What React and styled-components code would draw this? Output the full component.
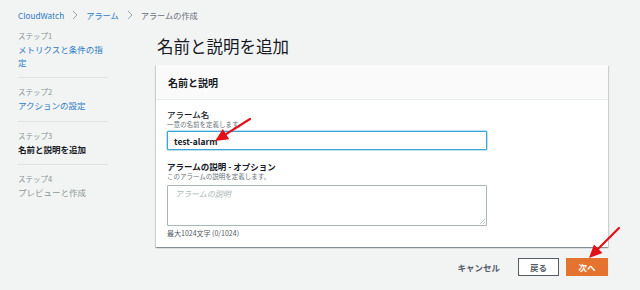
import React from 'react';
import styled, { createGlobalStyle } from 'styled-components';

const GlobalStyle = createGlobalStyle`
  html, body {
    margin: 0;
    padding: 0;
    background: #f2f3f3;
    font-family: "Noto Sans CJK JP", "Noto Sans", "Liberation Sans", sans-serif;
    color: #16191f;
  }
  * { box-sizing: border-box; }
`;

const Page = styled.div`
  position: relative;
  width: 640px;
  height: 290px;
  overflow: hidden;
`;

const Breadcrumb = styled.nav`
  display: flex;
  align-items: center;
  gap: 8px;
  height: 22px;
  padding: 9px 0 1px 18px;
  font-size: 8.2px;
  line-height: 12px;
`;

const Crumb = styled.span`
  color: ${(p) => (p.$link ? '#2e7bc4' : '#687078')};
`;

const Chevron = () => (
  <svg width="6" height="10" viewBox="0 0 6 10">
    <polyline points="1,1 5,5 1,9" fill="none" stroke="#9aa5a6" strokeWidth="1" />
  </svg>
);

const Layout = styled.div`
  display: flex;
  padding: 0 32px 0 18px;
`;

const Sidebar = styled.ul`
  list-style: none;
  margin: 0;
  padding: 0;
  width: 90px;
  flex-shrink: 0;
`;

const Step = styled.li`
  padding: 8px 0 9px;
  border-bottom: ${(p) => (p.$last ? 'none' : '1px solid #dfe3e4')};
`;

const StepNo = styled.div`
  font-size: 7.5px;
  line-height: 12px;
  color: #879596;
`;

const StepName = styled.div`
  margin-top: 1px;
  font-size: 8.5px;
  line-height: 12.5px;
  font-weight: ${(p) => (p.$state === 'current' ? 700 : 400)};
  color: ${(p) =>
    p.$state === 'current' ? '#16191f' : p.$state === 'done' ? '#2e7bc4' : '#8d9899'};
`;

const Main = styled.main`
  flex: 1;
  margin-left: 48px;
`;

const Title = styled.h1`
  margin: 12px 0 0 1px;
  font-size: 16.5px;
  line-height: 24px;
  font-weight: 400;
  color: #16191f;
`;

const Panel = styled.section`
  margin-top: 7px;
  background: #fff;
  box-shadow: 0 1px 1px rgba(0, 28, 36, 0.3), 1px 1px 1px rgba(0, 28, 36, 0.12),
    -1px 1px 1px rgba(0, 28, 36, 0.12);
`;

const PanelHeader = styled.header`
  height: 35px;
  display: flex;
  align-items: center;
  padding: 0 12px;
  background: #fafafa;
  border-bottom: 1px solid #eaeded;
  font-size: 10px;
  font-weight: 700;
`;

const PanelBody = styled.div`
  padding: 8px 11px 10px;
`;

const Field = styled.div`
  & + & {
    margin-top: 10px;
  }
`;

const Label = styled.div`
  font-size: 8.5px;
  line-height: 12px;
  font-weight: ${(p) => (p.$bold ? 700 : 500)};
  color: #16191f;
`;

const Hint = styled.div`
  font-size: 6.5px;
  line-height: 9px;
  color: #687078;
`;

const TextInput = styled.div`
  margin-top: 2px;
  width: 320px;
  height: 19px;
  border: 1px solid #3fa4d6;
  box-shadow: 0 0 0 0.5px #7cc3e4;
  border-radius: 1px;
  padding: 0 6px;
  display: flex;
  align-items: center;
  font-size: 8.5px;
  font-weight: 700;
  background: #fff;
`;

const TextArea = styled.div`
  position: relative;
  margin-top: 4px;
  width: 320px;
  height: 41px;
  border: 1px solid #aab7b8;
  border-radius: 1px;
  padding: 2px 7px;
  font-size: 8px;
  line-height: 12px;
  font-style: italic;
  color: #aab7b8;
`;

const Grip = styled.svg`
  position: absolute;
  right: 1px;
  bottom: 1px;
`;

const Counter = styled.div`
  margin-top: 3px;
  font-size: 7px;
  line-height: 8px;
  color: #545b64;
`;

const Actions = styled.div`
  display: flex;
  justify-content: flex-end;
  align-items: center;
  margin-top: 11px;
  gap: 7px;
`;

const LinkButton = styled.span`
  font-size: 8.5px;
  font-weight: 700;
  color: #545b64;
  margin-right: 11px;
`;

const Button = styled.div`
  width: ${(p) => (p.$primary ? 42 : 41)}px;
  height: 18px;
  display: flex;
  align-items: center;
  justify-content: center;
  font-size: 8.5px;
  font-weight: 700;
  background: ${(p) => (p.$primary ? '#e3732f' : '#fff')};
  color: ${(p) => (p.$primary ? '#fff' : '#545b64')};
  border: 1px solid ${(p) => (p.$primary ? '#e3732f' : '#545b64')};
`;

const Arrow = styled.svg`
  position: absolute;
  left: 0;
  top: 0;
  pointer-events: none;
`;

const RedArrow = ({ x1, y1, x2, y2 }) => {
  const a = Math.atan2(y2 - y1, x2 - x1);
  const len = 13;
  const w = 6;
  const bx = x2 - Math.cos(a) * len;
  const by = y2 - Math.sin(a) * len;
  const px = -Math.sin(a) * w;
  const py = Math.cos(a) * w;
  return (
    <g>
      <line x1={x1} y1={y1} x2={bx} y2={by} stroke="#e3101a" strokeWidth="2.2" strokeLinecap="round" />
      <polygon points={`${x2},${y2} ${bx + px},${by + py} ${bx - px},${by - py}`} fill="#e3101a" />
    </g>
  );
};

const steps = [
  { no: 'ステップ1', name: 'メトリクスと条件の指定', state: 'done' },
  { no: 'ステップ2', name: 'アクションの設定', state: 'done' },
  { no: 'ステップ3', name: '名前と説明を追加', state: 'current' },
  { no: 'ステップ4', name: 'プレビューと作成', state: 'todo' },
];

const App = () => (
  <Page>
    <GlobalStyle />
    <Breadcrumb>
      <Crumb $link>CloudWatch</Crumb>
      <Chevron />
      <Crumb $link>アラーム</Crumb>
      <Chevron />
      <Crumb>アラームの作成</Crumb>
    </Breadcrumb>
    <Layout>
      <Sidebar>
        {steps.map((s, i) => (
          <Step key={s.no} $last={i === steps.length - 1}>
            <StepNo>{s.no}</StepNo>
            <StepName $state={s.state}>{s.name}</StepName>
          </Step>
        ))}
      </Sidebar>
      <Main>
        <Title>名前と説明を追加</Title>
        <Panel>
          <PanelHeader>名前と説明</PanelHeader>
          <PanelBody>
            <Field>
              <Label>アラーム名</Label>
              <Hint>一意の名前を定義します。</Hint>
              <TextInput>test-alarm</TextInput>
            </Field>
            <Field>
              <Label $bold>アラームの説明 - オプション</Label>
              <Hint>このアラームの説明を定義します。</Hint>
              <TextArea>
                アラームの説明
                <Grip width="6" height="6" viewBox="0 0 6 6">
                  <path d="M6 1 L1 6 M6 4 L4 6" stroke="#aab7b8" strokeWidth="0.8" />
                </Grip>
              </TextArea>
              <Counter>最大1024文字 (0/1024)</Counter>
            </Field>
          </PanelBody>
        </Panel>
        <Actions>
          <LinkButton>キャンセル</LinkButton>
          <Button>戻る</Button>
          <Button $primary>次へ</Button>
        </Actions>
      </Main>
    </Layout>
    <Arrow width="640" height="290" viewBox="0 0 640 290">
      <RedArrow x1={250} y1={119} x2={215} y2={141} />
      <RedArrow x1={619} y1={228} x2={589} y2={258} />
    </Arrow>
  </Page>
);

export default App;
